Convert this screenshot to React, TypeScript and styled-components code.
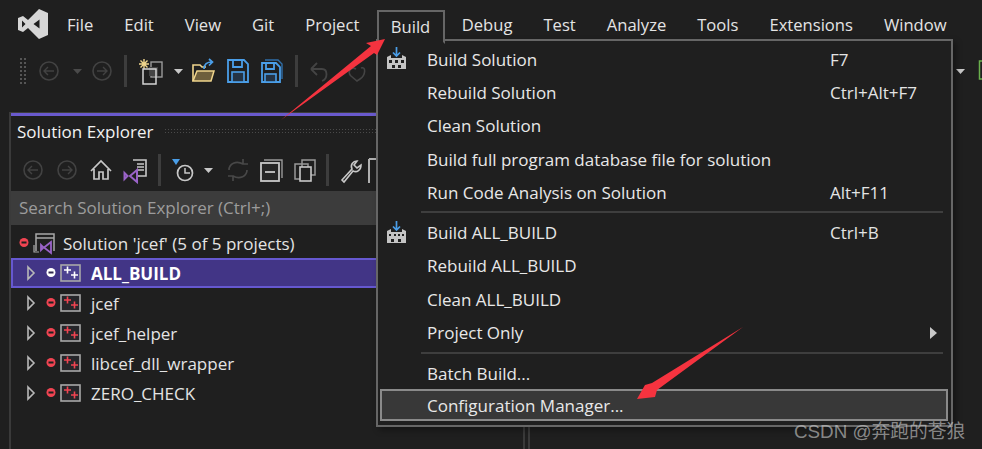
import React from "react";
import styled, { createGlobalStyle } from "styled-components";

const Global = createGlobalStyle`
  html, body { margin: 0; padding: 0; background: #1f1f1f; }
  #root { width: 982px; height: 449px; overflow: hidden; }
`;

const Page = styled.div`
  position: relative;
  width: 982px;
  height: 449px;
  overflow: hidden;
  background: #1f1f1f;
  color: #e4e4e4;
  font-family: "Open Sans", "Noto Sans", sans-serif;
  font-size: 17px;
  display: flex;
  flex-direction: column;
`;

const MenuBar = styled.nav`
  display: flex;
  align-items: flex-start;
  height: 52px;
  flex: none;
  font-size: 16.6px;
`;
const Logo = styled.svg`
  width: 30px;
  height: 30px;
  margin: 9px 3.5px 0 18px;
  flex: none;
`;
const MenuItem = styled.div<{ $open?: boolean }>`
  position: relative;
  z-index: ${(p) => (p.$open ? 5 : 0)};
  height: 30px;
  margin: 10px ${(p) => (p.$open ? "1px" : "0")} 0 ${(p) => (p.$open ? "2px" : "0")};
  padding: ${(p) => (p.$open ? "0 13px 0 12px" : "0 15.5px")};
  line-height: 30px;
  white-space: nowrap;
  border-style: solid;
  border-color: ${(p) => (p.$open ? "#666 #666 #1f1f1f" : "transparent")};
  border-width: ${(p) => (p.$open ? "2px" : "0")};
  background: #1f1f1f;
`;

const Toolbar = styled.div`
  display: flex;
  align-items: center;
  height: 38px;
  margin-bottom: 22px;
  padding-left: 19px;
  flex: none;
`;
const Grip = styled.div`
  width: 8px;
  height: 28px;
  flex: none;
  background-image: radial-gradient(#555 0.8px, transparent 1px);
  background-size: 4px 4px;
`;
const ToolSep = styled.div<{ $h?: number }>`
  width: 3px;
  height: ${(p) => p.$h ?? 32}px;
  background: #3d3d3d;
  flex: none;
`;
const Tool = styled.svg<{ $w: number; $after?: number }>`
  width: ${(p) => p.$w}px;
  height: 28px;
  flex: none;
  margin-right: ${(p) => p.$after ?? 0}px;
`;
const Spacer = styled.div<{ $w: number }>`
  width: ${(p) => p.$w}px;
  flex: none;
`;

const Workspace = styled.div`
  display: flex;
  flex: 1;
  min-height: 0;
  padding-left: 9px;
`;
const Panel = styled.section`
  width: 512px;
  border-left: 2px solid #3a3a3a;
  border-right: 2px solid #3a3a3a;
  border-top: 1px solid #3d3d3d;
  display: flex;
  flex-direction: column;
  flex: none;
`;
const Accent = styled.div`
  height: 3px;
  background: #6a5acd;
  flex: none;
`;
const TitleRow = styled.div`
  display: flex;
  align-items: center;
  height: 30px;
  margin-bottom: 2px;
  padding-left: 6px;
  gap: 11px;
  color: #f2f2f2;
  flex: none;
`;
const TitleGrip = styled.div`
  flex: 1;
  height: 7px;
  background-image: radial-gradient(#4a4a4a 0.8px, transparent 1px);
  background-size: 3px 3px;
`;
const PanelTools = styled.div`
  display: flex;
  align-items: center;
  height: 43px;
  padding-left: 12px;
  flex: none;
`;
const Search = styled.div`
  height: 34px;
  background: #3c3c3c;
  color: #9c9c9c;
  line-height: 33px;
  padding-left: 8px;
  flex: none;
`;
const Tree = styled.div`
  padding-top: 3px;
  display: flex;
  flex-direction: column;
`;
const TreeRow = styled.div<{ $selected?: boolean; $root?: boolean }>`
  height: 30px;
  box-sizing: border-box;
  display: flex;
  align-items: center;
  padding-left: ${(p) => (p.$root ? 8 : 15)}px;
  background: ${(p) => (p.$selected ? "#423586" : "transparent")};
  outline: ${(p) => (p.$selected ? "2px solid #6658d0" : "none")};
  outline-offset: -2px;
  font-weight: ${(p) => (p.$selected ? 700 : 400)};
  color: ${(p) => (p.$selected ? "#fff" : "#e4e4e4")};
`;
const TreeIcon = styled.svg<{ $w: number; $after?: number }>`
  width: ${(p) => p.$w}px;
  height: 24px;
  flex: none;
  margin-right: ${(p) => p.$after ?? 0}px;
`;
const SidePanel = styled.div`
  width: 4px;
  margin-left: 3px;
  border-left: 2px solid #3a3a3a;
  flex: none;
`;

const Dropdown = styled.div`
  position: absolute;
  z-index: 4;
  left: 376px;
  top: 39px;
  width: 577px;
  height: 388px;
  box-sizing: border-box;
  background: #1f1f1f;
  border: 2px solid #666;
  padding: 1.5px 3px 4px 2px;
  box-shadow: 3px 3px 6px rgba(0, 0, 0, 0.35);
  display: flex;
  flex-direction: column;
`;
const Row = styled.div<{ $hot?: boolean }>`
  height: ${(p) => (p.$hot ? 32 : 33.3)}px;
  margin-top: ${(p) => (p.$hot ? -1 : 0)}px;
  flex: none;
  box-sizing: border-box;
  display: grid;
  grid-template-columns: 45px 403px 1fr 24px;
  align-items: center;
  background: ${(p) => (p.$hot ? "#383838" : "transparent")};
  border: 2px solid ${(p) => (p.$hot ? "#8a8a8a" : "transparent")};
`;
const RowIcon = styled.svg`
  width: 26px;
  height: 28px;
  margin-left: 3px;
`;
const RowLabel = styled.span`
  white-space: nowrap;
  color: #e8e8e8;
`;
const Shortcut = styled.span`
  white-space: nowrap;
  color: #e4e4e4;
`;
const Submenu = styled.svg`
  width: 8px;
  height: 12px;
  justify-self: center;
`;
const MenuSep = styled.div<{ $below?: number }>`
  height: 2px;
  margin: 2.5px 5px ${(p) => p.$below ?? 2.5}px 41px;
  background: #3e3e3e;
  flex: none;
`;

const Overlay = styled.svg`
  position: absolute;
  z-index: 8;
  left: 0;
  top: 0;
  width: 982px;
  height: 449px;
  pointer-events: none;
`;
const Watermark = styled.div`
  position: absolute;
  z-index: 9;
  left: 794px;
  top: 416px;
  font-family: "Liberation Sans", "Noto Sans CJK SC", sans-serif;
  font-size: 18.8px;
  color: rgba(205, 205, 205, 0.62);
  white-space: nowrap;
`;
const FarTools = styled.svg`
  position: absolute;
  z-index: 1;
  left: 952px;
  top: 56px;
  width: 30px;
  height: 28px;
`;

const BuildGlyph = ({ solid }: { solid?: boolean }) => (
  <RowIcon viewBox="0 0 26 28">
    <path d="M11.5 2v9M8 7.5l3.5 3.5L15 7.5" stroke="#4a9ee8" strokeWidth="1.7" fill="none" />
    <path d="M2 24V12l4-2v3h11v-3l4 2v12z" fill="#c4c4c4" />
    {solid ? (
      <path d="M4 15h2v2H4zM9 15h2v2H9zM13 15h2v2h-2zM17 15h2v2h-2zM6 20h3v3H6zM13 20h3v3h-3z" fill="#1f1f1f" />
    ) : (
      <path d="M4 15h3v3H4zM10 15h3v3h-3zM16 15h3v3h-3zM7 20h3v3H7zM13 20h3v3h-3z" fill="#1f1f1f" />
    )}
  </RowIcon>
);

const ProjectIcon = ({ color }: { color: string }) => (
  <TreeIcon $w={21} $after={10} viewBox="0 0 21 24">
    <rect x="1" y="4" width="19" height="16" fill={color === "#fff" ? "#4c4290" : "#26262a"} stroke="#a8a8a8" strokeWidth="1.6" />
    <path d="M4 9h7M7.5 5.5v7M11 14h7M14.5 10.5v7" stroke={color} strokeWidth="1.6" />
  </TreeIcon>
);

const Expander = () => (
  <TreeIcon $w={10} $after={10} viewBox="0 0 10 24">
    <path d="M2 6l6 6-6 6z" fill="none" stroke="#b8b8b8" strokeWidth="1.6" />
  </TreeIcon>
);

const Status = ({ color, dash, after }: { color: string; dash: string; after: number }) => (
  <TreeIcon $w={10} $after={after} viewBox="0 0 10 24">
    <circle cx="5" cy="11.5" r="4.5" fill={color} />
    <rect x="2.5" y="10.5" width="5" height="2" fill={dash} />
  </TreeIcon>
);

const NavCircle = ({ dir, after = 0 }: { dir: "l" | "r"; after?: number }) => (
  <Tool $w={20} $after={after} viewBox="0 0 20 28">
    <circle cx="10" cy="14" r="9" fill="none" stroke="#424242" strokeWidth="1.6" />
    <path d={dir === "l" ? "M15 14H5M9 10l-4 4 4 4" : "M5 14h10M11 10l4 4-4 4"} fill="none" stroke="#424242" strokeWidth="1.4" />
  </Tool>
);

const Caret = ({ color = "#c8c8c8", after = 0 }: { color?: string; after?: number }) => (
  <Tool $w={9} $after={after} viewBox="0 0 9 28">
    <path d="M0 12h9l-4.5 5z" fill={color} />
  </Tool>
);

const menuNames = ["File", "Edit", "View", "Git", "Project", "Build", "Debug", "Test", "Analyze", "Tools", "Extensions", "Window"];
const projects = ["jcef", "jcef_helper", "libcef_dll_wrapper", "ZERO_CHECK"];

export default function App() {
  return (
    <Page>
      <Global />
      <MenuBar>
        <Logo viewBox="0 0 30 30">
          <path
            fillRule="evenodd"
            fill="#d6d6d6"
            d="M21 0l9 4v22l-9 4L10 19l-5 4-5-2V9l5-2 5 4zM4 11.5v7l3.5-3.5zM15.5 15l6 4.5v-9z"
          />
        </Logo>
        {menuNames.map((n) => (
          <MenuItem key={n} $open={n === "Build"}>
            {n}
          </MenuItem>
        ))}
      </MenuBar>

      <Toolbar>
        <Grip />
        <Spacer $w={12} />
        <NavCircle dir="l" after={14} />
        <Caret color="#4a4a4a" after={10} />
        <NavCircle dir="r" after={12} />
        <ToolSep />
        <Spacer $w={11} />
        <Tool $w={25} $after={11} viewBox="0 0 25 28">
          <path d="M6 2v10M1 7h10M2.5 3.5l7 7M9.5 3.5l-7 7" stroke="#f0d58c" strokeWidth="1.4" />
          <rect x="13" y="5" width="11" height="15" fill="#1f1f1f" stroke="#9a9a9a" strokeWidth="1.4" />
          <rect x="11" y="10" width="9" height="9" fill="#444" />
          <rect x="5" y="12" width="13" height="15" fill="none" stroke="#d4d4d4" strokeWidth="1.5" />
        </Tool>
        <Caret after={9} />
        <Tool $w={23} $after={12} viewBox="0 0 23 28">
          <path d="M1 24V8h7l2 2h4" fill="none" stroke="#f0d58c" strokeWidth="1.6" />
          <path d="M5 14h17l-3 10H1z" fill="#6e5f3c" stroke="#f0d58c" strokeWidth="1.5" />
          <path d="M12 12c0-5 3-7 8-7M17 2l3.5 3-3.5 3.5" fill="none" stroke="#4a9ee8" strokeWidth="1.7" />
        </Tool>
        <Tool $w={22} $after={12} viewBox="0 0 22 28">
          <path d="M1 3h16l4 4v18H1z" fill="none" stroke="#4a9ee8" strokeWidth="1.8" />
          <rect x="5" y="15" width="12" height="10" fill="#243344" stroke="#4a9ee8" strokeWidth="1.6" />
          <path d="M6 3v7h9V3" fill="none" stroke="#4a9ee8" strokeWidth="1.8" />
        </Tool>
        <Tool $w={22} $after={12} viewBox="0 0 22 28">
          <path d="M4 3h13l4 4v15" fill="none" stroke="#2f6ea8" strokeWidth="1.4" />
          <path d="M1 6h14l4 4v15H1z" fill="#1f1f1f" stroke="#4a9ee8" strokeWidth="1.8" />
          <rect x="4" y="17" width="11" height="8" fill="#243344" stroke="#4a9ee8" strokeWidth="1.6" />
          <path d="M5 6v6h8V6" fill="none" stroke="#4a9ee8" strokeWidth="1.8" />
        </Tool>
        <ToolSep />
        <Spacer $w={11} />
        <Tool $w={20} $after={18} viewBox="0 0 20 28">
          <path d="M2 12h11c6 0 6 10 0 12M2 12l6-6M2 12l6 6" fill="none" stroke="#444" strokeWidth="1.8" />
        </Tool>
        <Tool $w={20} viewBox="0 0 20 28">
          <path d="M14 11c5-2 5 7-1 11l-3 2-6-5c-4-4 0-10 5-7" fill="none" stroke="#444" strokeWidth="1.6" />
        </Tool>
      </Toolbar>

      <Workspace>
        <Panel>
          <Accent />
          <TitleRow>
            Solution Explorer
            <TitleGrip />
          </TitleRow>
          <PanelTools>
            <NavCircle dir="l" after={14} />
            <NavCircle dir="r" after={13} />
            <Tool $w={22} $after={11} viewBox="0 0 22 28">
              <path d="M1 15 11 5l10 10M4 13v10h5v-7h4v7h5V13" fill="none" stroke="#c8c8c8" strokeWidth="1.7" />
            </Tool>
            <Tool $w={24} $after={11} viewBox="0 0 24 28">
              <path d="M10 4h13v16H13" fill="none" stroke="#c8c8c8" strokeWidth="1.6" />
              <path d="M14 8h7M14 11h7M14 14h7" stroke="#c8c8c8" strokeWidth="1.5" />
              <path d="M1.5 17v6l3-3zM14 14l-7 6 7 6z" fill="none" stroke="#9a63c8" strokeWidth="2" />
            </Tool>
            <ToolSep $h={32} />
            <Spacer $w={11} />
            <Tool $w={23} $after={9} viewBox="0 0 23 28">
              <path d="M0 3h8L4 9z" fill="#4a9ee8" />
              <circle cx="13" cy="17" r="7.5" fill="none" stroke="#c8c8c8" strokeWidth="1.7" />
              <path d="M13 12v5h5" fill="none" stroke="#c8c8c8" strokeWidth="1.5" />
            </Tool>
            <Caret after={14} />
            <Tool $w={22} $after={11} viewBox="0 0 22 28">
              <path d="M2 14c0-6 7-10 14-6M20 14c0 6-7 10-14 6M16 3v5h5M6 25v-5H1" fill="none" stroke="#484848" strokeWidth="1.7" />
            </Tool>
            <Tool $w={23} $after={11} viewBox="0 0 23 28">
              <path d="M4 4h18v18" fill="none" stroke="#999" strokeWidth="1.4" />
              <rect x="1" y="7" width="18" height="18" fill="#262626" stroke="#c8c8c8" strokeWidth="1.8" />
              <path d="M5 16h10" stroke="#c8c8c8" strokeWidth="1.8" />
            </Tool>
            <Tool $w={22} $after={10} viewBox="0 0 22 28">
              <rect x="8" y="4" width="13" height="15" fill="none" stroke="#999" strokeWidth="1.5" />
              <rect x="1" y="8" width="13" height="15" fill="none" stroke="#999" strokeWidth="1.5" />
              <rect x="6" y="11" width="11" height="14" fill="#1f1f1f" stroke="#c8c8c8" strokeWidth="1.6" />
            </Tool>
            <ToolSep $h={32} />
            <Spacer $w={11} />
            <Tool $w={22} $after={6} viewBox="0 0 22 28">
              <path d="M2 24 12 13c-2-4 1-8 5-8l-3 4 3 3 4-3c0 5-4 8-8 6L4 26z" fill="none" stroke="#c8c8c8" strokeWidth="1.6" />
            </Tool>
            <Tool $w={14} viewBox="0 0 14 28">
              <path d="M1 3v24M1 3h13" fill="none" stroke="#b0b0b0" strokeWidth="2" />
            </Tool>
          </PanelTools>
          <Search>Search Solution Explorer (Ctrl+;)</Search>
          <Tree>
            <TreeRow $root>
              <Status color="#f04452" dash="#1f1f1f" after={4} />
              <TreeIcon $w={22} $after={8} viewBox="0 0 22 24">
                <path d="M3 20V3h18v17" fill="none" stroke="#a8a8a8" strokeWidth="1.5" />
                <path d="M3 7h18" stroke="#a8a8a8" strokeWidth="1.5" />
                <path d="M1 14v7h5" fill="none" stroke="#a8a8a8" strokeWidth="1.2" />
                <path d="M8 14v5l2.5-2.5zM18 11l-7 5.5 7 5.5z" fill="none" stroke="#9a63c8" strokeWidth="1.8" />
              </TreeIcon>
              Solution 'jcef' (5 of 5 projects)
            </TreeRow>
            <TreeRow $selected>
              <Expander />
              <Status color="#fff" dash="#30284e" after={4} />
              <ProjectIcon color="#fff" />
              ALL_BUILD
            </TreeRow>
            {projects.map((p) => (
              <TreeRow key={p}>
                <Expander />
                <Status color="#f04452" dash="#1f1f1f" after={4} />
                <ProjectIcon color="#f04452" />
                {p}
              </TreeRow>
            ))}
          </Tree>
        </Panel>
        <SidePanel />
      </Workspace>

      <FarTools viewBox="0 0 30 28">
        <path d="M4 13h9l-4.5 5z" fill="#c8c8c8" />
        <rect x="27.5" y="5" width="6" height="18" fill="none" stroke="#6ab04c" strokeWidth="1.5" />
      </FarTools>

      <Dropdown>
        <Row>
          <BuildGlyph />
          <RowLabel>Build Solution</RowLabel>
          <Shortcut>F7</Shortcut>
        </Row>
        <Row>
          <span />
          <RowLabel>Rebuild Solution</RowLabel>
          <Shortcut>Ctrl+Alt+F7</Shortcut>
        </Row>
        <Row>
          <span />
          <RowLabel>Clean Solution</RowLabel>
        </Row>
        <Row>
          <span />
          <RowLabel>Build full program database file for solution</RowLabel>
        </Row>
        <Row>
          <span />
          <RowLabel>Run Code Analysis on Solution</RowLabel>
          <Shortcut>Alt+F11</Shortcut>
        </Row>
        <MenuSep />
        <Row>
          <BuildGlyph solid />
          <RowLabel>Build ALL_BUILD</RowLabel>
          <Shortcut>Ctrl+B</Shortcut>
        </Row>
        <Row>
          <span />
          <RowLabel>Rebuild ALL_BUILD</RowLabel>
        </Row>
        <Row>
          <span />
          <RowLabel>Clean ALL_BUILD</RowLabel>
        </Row>
        <Row>
          <span />
          <RowLabel>Project Only</RowLabel>
          <span />
          <Submenu viewBox="0 0 8 12">
            <path d="M0 0l7 6-7 6z" fill="#c8c8c8" />
          </Submenu>
        </Row>
        <MenuSep $below={3.5} />
        <Row>
          <span />
          <RowLabel>Batch Build...</RowLabel>
        </Row>
        <Row $hot>
          <span />
          <RowLabel>Configuration Manager...</RowLabel>
        </Row>
      </Dropdown>

      <Overlay viewBox="0 0 982 449">
        <path d="M281 120 371 46 366 43 385 39 377 55 374 53z" fill="#f5333f" />
        <path d="M743 327 652 383 645 385 637 399 655 397 657 390z" fill="#f5333f" />
      </Overlay>
      <Watermark>CSDN @奔跑的苍狼</Watermark>
    </Page>
  );
}
